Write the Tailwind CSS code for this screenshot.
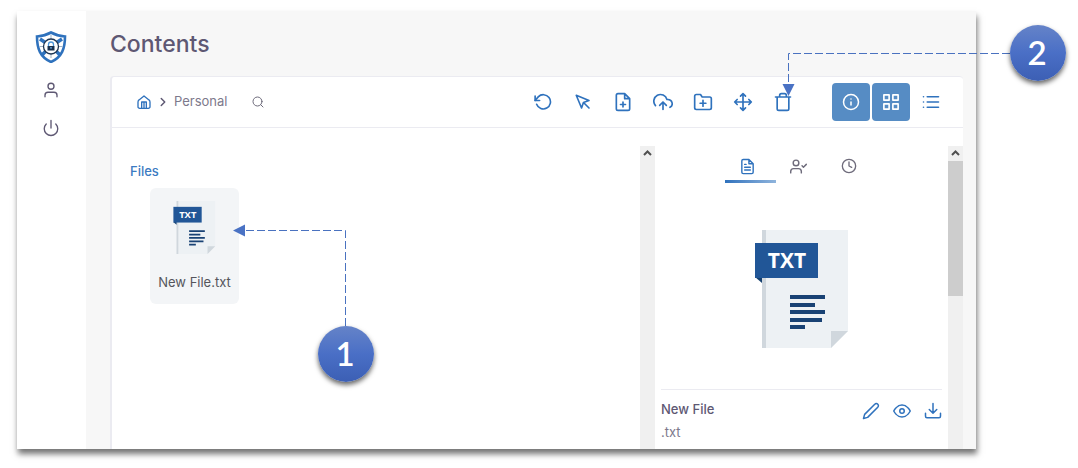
<!DOCTYPE html>
<html lang="en">
<head>
<meta charset="utf-8">
<meta name="viewport" content="width=device-width, initial-scale=1">
<title>Contents</title>
<script src="https://cdn.jsdelivr.net/npm/@tailwindcss/browser@4"></script>
</head>
<body class="relative flex min-h-screen bg-white pt-[11px] pr-[102px] pb-[19px] pl-[17px] font-[Inter,sans-serif] text-[#5e5873]">
<svg class="hidden" aria-hidden="true">
  <symbol id="txt-file" viewBox="0 0 94 118">
    <path fill="#edf1f4" d="M7 0h86v101l-17 17H7z"/>
    <path fill="#d0d7dd" d="M7 0h4v118H7zM76 101h17l-17 17z"/>
    <path fill="#15406f" d="M0 47h7v6z"/>
    <path fill="#215697" d="M0 13h63v35H0z"/>
    <text x="32" y="38" text-anchor="middle" font-family="Open Sans, sans-serif" font-weight="700" font-size="21" fill="#fff">TXT</text>
    <path fill="#194274" d="M35 65h35v4H35zM35 73h25v4H35zM35 80h35v4H35zM35 88h32v4H35zM35 95h15v4H35z"/>
  </symbol>
</svg>

<div class="flex min-w-0 flex-1 overflow-hidden bg-[#f7f7f7] shadow-[1px_5px_6px_rgba(0,0,0,0.55)]">
  <nav class="flex w-[69px] shrink-0 flex-col items-center bg-white pt-5 pr-0.5" aria-label="Main">
    <a href="#" aria-label="Home">
      <svg class="h-8 w-8" viewBox="0 0 32 32" fill="none">
        <path d="M16 1.500C11.500 4 7 5 2 5.500c0 12 3 20.500 14 25.500 11-5 14-13.500 14-25.500C25 5 20.500 4 16 1.500z" stroke="#2f72bd" stroke-width="2.600" fill="#fff"/>
        <path d="M5 8l6 4M27 8l-6 4M7 24l5-5M25 24l-5-5" stroke="#2f72bd" stroke-width="3.500"/>
        <path d="M16 4v4M16 23v4M4.500 15.500H8M24 15.500h3.500" stroke="#9fb3c8"/>
        <circle cx="16" cy="15.500" r="7.500" fill="#fff" stroke="#1d3552" stroke-width="1.300"/>
        <path d="M13.500 15v-1.500a2.500 2.500 0 0 1 5 0V15" stroke="#4f97d8" stroke-width="1.300"/>
        <path d="M12.500 15h7v4.500h-7z" fill="#17304e"/>
        <circle cx="16" cy="16.800" r=".9" fill="#6fb0e8"/>
      </svg>
    </a>
    <a href="#" class="mt-[18px]" aria-label="Profile">
      <svg class="h-[18px] w-[18px]" viewBox="0 0 24 24" fill="none" stroke="currentColor" stroke-width="1.800" stroke-linecap="round" stroke-linejoin="round"><path d="M20 21v-2a4 4 0 0 0-4-4H8a4 4 0 0 0-4 4v2"/><circle cx="12" cy="7" r="4"/></svg>
    </a>
    <a href="#" class="mt-5" aria-label="Sign out">
      <svg class="h-[18px] w-[18px]" viewBox="0 0 24 24" fill="none" stroke="currentColor" stroke-width="1.800" stroke-linecap="round" stroke-linejoin="round"><path d="M18.360 6.640a9 9 0 1 1-12.730 0M12 2v10"/></svg>
    </a>
  </nav>

  <main class="flex min-w-0 flex-1 flex-col pt-[17px] pr-[13px] pl-6">
    <h1 class="mb-4 text-[23px] leading-8 font-medium">Contents</h1>

    <section class="flex min-w-0 flex-1 flex-col rounded-t border-t border-l-2 border-[#ebebf1] bg-white">
      <div class="flex h-[51px] shrink-0 items-center border-b border-[#ebebf1] pr-[13px] pl-6">
        <div class="flex flex-1 items-center">
          <a href="#" class="text-[#2f72bd]" aria-label="Root folder">
            <svg class="h-4 w-4" viewBox="0 0 24 24" fill="none" stroke="currentColor" stroke-width="2" stroke-linecap="round" stroke-linejoin="round"><path d="M5 8.500L12 3l7 5.500A4 4 0 0 1 21 12v7a2.500 2.500 0 0 1-2.500 2.500h-13A2.500 2.500 0 0 1 3 19v-7a4 4 0 0 1 2-3.500zM8.500 21v-9h7v9M12 13v8"/></svg>
          </a>
          <svg class="mx-1 h-3.5 w-3.5" viewBox="0 0 24 24" fill="none" stroke="currentColor" stroke-width="2.500" stroke-linecap="round" stroke-linejoin="round"><path d="M9 18l6-6-6-6"/></svg>
          <a href="#" class="text-[13px] text-[#7d798c]">Personal</a>
          <button type="button" class="ml-6 text-[#6e6b7b]" aria-label="Search">
            <svg class="h-3 w-3" viewBox="0 0 24 24" fill="none" stroke="currentColor" stroke-width="2" stroke-linecap="round"><circle cx="11" cy="11" r="9"/><path d="M22 22l-4.600-4.600"/></svg>
          </button>
        </div>
        <div class="mr-[29px] flex text-[#2f72bd]">
          <button type="button" class="grid h-10 w-10 place-items-center" aria-label="Refresh">
            <svg class="h-[18px] w-[18px]" viewBox="0 0 24 24" fill="none" stroke="currentColor" stroke-width="2.200" stroke-linecap="round" stroke-linejoin="round"><path d="M1.500 4v6h6"/><path d="M3.510 15a9.500 9.500 0 1 0 2.130-9.860L1.500 10"/></svg>
          </button>
          <button type="button" class="grid h-10 w-10 place-items-center" aria-label="Select">
            <svg class="h-[18px] w-[18px]" viewBox="0 0 24 24" fill="none" stroke="currentColor" stroke-width="2.200" stroke-linecap="round" stroke-linejoin="round"><path d="M3 3l7.070 16.970 2.510-7.390 7.390-2.510zM13 13l7 7"/></svg>
          </button>
          <button type="button" class="grid h-10 w-10 place-items-center" aria-label="New file">
            <svg class="h-5 w-5" viewBox="0 0 24 24" fill="none" stroke="currentColor" stroke-width="2" stroke-linecap="round" stroke-linejoin="round"><path d="M14 2H6a2 2 0 0 0-2 2v16a2 2 0 0 0 2 2h12a2 2 0 0 0 2-2V8zM14 2v6h6M12 18v-6M9 15h6"/></svg>
          </button>
          <button type="button" class="grid h-10 w-10 place-items-center" aria-label="Upload">
            <svg class="h-5 w-5" viewBox="0 0 24 24" fill="none" stroke="currentColor" stroke-width="2" stroke-linecap="round" stroke-linejoin="round"><path d="M16 16l-4-4-4 4M12 12v9"/><path d="M20.390 18.390A5 5 0 0 0 18 9h-1.260A8 8 0 1 0 3 16.300"/></svg>
          </button>
          <button type="button" class="grid h-10 w-10 place-items-center" aria-label="New folder">
            <svg class="h-5 w-5" viewBox="0 0 24 24" fill="none" stroke="currentColor" stroke-width="2" stroke-linecap="round" stroke-linejoin="round"><path d="M22 19a2 2 0 0 1-2 2H4a2 2 0 0 1-2-2V5a2 2 0 0 1 2-2h5l2 3h9a2 2 0 0 1 2 2zM12 17v-7M8.500 13.500h7"/></svg>
          </button>
          <button type="button" class="grid h-10 w-10 place-items-center" aria-label="Move">
            <svg class="h-5 w-5" viewBox="0 0 24 24" fill="none" stroke="currentColor" stroke-width="2" stroke-linecap="round" stroke-linejoin="round"><path d="M5 9l-3 3 3 3M9 5l3-3 3 3M15 19l-3 3-3-3M19 9l3 3-3 3M2 12h20M12 2v20"/></svg>
          </button>
          <button type="button" class="grid h-10 w-10 place-items-center" aria-label="Delete">
            <svg class="h-5 w-5" viewBox="0 0 24 24" fill="none" stroke="currentColor" stroke-width="2" stroke-linecap="round" stroke-linejoin="round"><path d="M3 6h18M19 6v14a2 2 0 0 1-2 2H7a2 2 0 0 1-2-2V6m3 0V4a2 2 0 0 1 2-2h4a2 2 0 0 1 2 2v2"/></svg>
          </button>
        </div>
        <div class="flex gap-0.5">
          <button type="button" class="grid h-[38px] w-[38px] place-items-center rounded bg-[#568cc4] text-white" aria-label="Details" aria-pressed="true">
            <svg class="h-[18px] w-[18px]" viewBox="0 0 24 24" fill="none" stroke="currentColor" stroke-width="2" stroke-linecap="round" stroke-linejoin="round"><circle cx="12" cy="12" r="10"/><path d="M12 16v-4M12 8h.01"/></svg>
          </button>
          <button type="button" class="grid h-[38px] w-[38px] place-items-center rounded bg-[#568cc4] text-white" aria-label="Grid view" aria-pressed="true">
            <svg class="h-[18px] w-[18px]" viewBox="0 0 24 24" fill="none" stroke="currentColor" stroke-width="2.200" stroke-linejoin="round"><path d="M2.500 2.500h7v7h-7zM14.500 2.500h7v7h-7zM14.500 14.500h7v7h-7zM2.500 14.500h7v7h-7z"/></svg>
          </button>
          <button type="button" class="grid h-[38px] w-[38px] place-items-center text-[#2f72bd]" aria-label="List view">
            <svg class="h-[18px] w-[18px]" viewBox="0 0 24 24" fill="none" stroke="currentColor" stroke-width="2.200" stroke-linecap="round"><path d="M7 5h15M7 12h15M7 19h15M2 5h.01M2 12h.01M2 19h.01"/></svg>
          </button>
        </div>
      </div>

      <div class="flex min-h-0 flex-1 pt-[18px]">
        <div class="min-w-0 flex-1 pt-[15px] pl-[18px]">
          <h2 class="text-[13px] leading-5 font-medium text-[#3b7bc2]">Files</h2>
          <button type="button" class="mt-[7px] ml-5 flex h-[116px] w-[89px] flex-col items-center rounded-md bg-[#f3f5f7] pt-[13px] text-[13px] text-[#55555c]">
            <svg class="h-[53px] w-[43px]" aria-hidden="true"><use href="#txt-file"/></svg>
            <span class="mt-[18px] leading-5 whitespace-nowrap">New File.txt</span>
          </button>
        </div>

        <div class="w-[15px] shrink-0 bg-[#f0f0f0]" aria-hidden="true">
          <svg class="h-[15px] w-[15px]" viewBox="0 0 15 15" fill="none" stroke="#505050" stroke-width="2"><path d="M4 9l3.500-3.500L11 9"/></svg>
        </div>

        <aside class="flex w-[293px] shrink-0 flex-col px-1.5" aria-label="File details">
          <div class="flex justify-center">
            <button type="button" class="flex h-[37px] w-[51px] flex-col items-start justify-between pt-3 text-[#2f72bd]" aria-label="Information">
              <svg class="ml-3.5 h-[17px] w-[17px]" viewBox="0 0 24 24" fill="none" stroke="currentColor" stroke-width="2" stroke-linecap="round" stroke-linejoin="round"><path d="M14 2H6a2 2 0 0 0-2 2v16a2 2 0 0 0 2 2h12a2 2 0 0 0 2-2V8zM14 2v6h6M16 13H8M16 17H8M10 9H8"/></svg>
              <span class="h-[3px] w-full bg-linear-to-r from-[#2f72bd] to-[#8fb4dc]"></span>
            </button>
            <button type="button" class="flex h-[37px] w-[51px] items-start pt-3 pl-3.5 text-[#6e6b7b]" aria-label="Permissions">
              <svg class="h-[17px] w-[17px]" viewBox="0 0 24 24" fill="none" stroke="currentColor" stroke-width="2" stroke-linecap="round" stroke-linejoin="round"><path d="M16 21v-2a4 4 0 0 0-4-4H5a4 4 0 0 0-4 4v2"/><circle cx="8.500" cy="7" r="4"/><path d="M17 11l2 2 4-4"/></svg>
            </button>
            <button type="button" class="flex h-[37px] w-[51px] items-start pt-3 pl-3.5 text-[#6e6b7b]" aria-label="History">
              <svg class="h-4 w-4" viewBox="0 0 24 24" fill="none" stroke="currentColor" stroke-width="2" stroke-linecap="round" stroke-linejoin="round"><circle cx="12" cy="12" r="10"/><path d="M12 6v6l4 2"/></svg>
            </button>
          </div>
          <svg class="mt-[47px] h-[118px] w-[94px] self-center" role="img" aria-label="Text file"><use href="#txt-file"/></svg>
          <div class="mt-[41px] flex items-start justify-between border-t border-[#ebebf1] pt-[9px]">
            <div class="text-[13px]">
              <h3 class="leading-5 font-medium">New File</h3>
              <p class="mt-[3px] leading-5 text-[#7d798c]">.txt</p>
            </div>
            <div class="flex gap-[13px] pt-[3px] text-[#2f72bd]">
              <button type="button" aria-label="Rename"><svg class="h-[18px] w-[18px]" viewBox="0 0 24 24" fill="none" stroke="currentColor" stroke-width="2" stroke-linecap="round" stroke-linejoin="round"><path d="M17 3a2.830 2.830 0 1 1 4 4L7.500 20.500 2 22l1.500-5.500z"/></svg></button>
              <button type="button" aria-label="Preview"><svg class="h-[18px] w-[18px]" viewBox="0 0 24 24" fill="none" stroke="currentColor" stroke-width="2" stroke-linecap="round" stroke-linejoin="round"><path d="M1 12s4-8 11-8 11 8 11 8-4 8-11 8-11-8-11-8z"/><circle cx="12" cy="12" r="3"/></svg></button>
              <button type="button" aria-label="Download"><svg class="h-[18px] w-[18px]" viewBox="0 0 24 24" fill="none" stroke="currentColor" stroke-width="2" stroke-linecap="round" stroke-linejoin="round"><path d="M22 15v4a2 2 0 0 1-2 2H4a2 2 0 0 1-2-2v-4M7 10l5 5 5-5M12 15V2"/></svg></button>
            </div>
          </div>
        </aside>

        <div class="w-[15px] shrink-0 bg-[#f0f0f0]" aria-hidden="true">
          <svg class="h-[15px] w-[15px]" viewBox="0 0 15 15" fill="none" stroke="#505050" stroke-width="2"><path d="M4 9l3.500-3.500L11 9"/></svg>
          <div class="h-[135px] bg-[#cdcdcd]"></div>
        </div>
      </div>
    </section>
  </main>
</div>

<!-- Callouts drawn over the window -->
<svg class="pointer-events-none absolute top-0 left-0 h-[468px] w-[1078px]" viewBox="0 0 1078 468" fill="none" stroke="#4a72c0" aria-hidden="true">
  <path d="M345.500 326V230.500H244" stroke-dasharray="8 3"/>
  <path d="M1010 53.500H788.500V84" stroke-dasharray="8 3"/>
  <path d="M233 230.500l12-6v12zM788.500 96l-6-12h12z" fill="#4a72c4" stroke="none"/>
</svg>
<div class="absolute top-[326px] left-[318px] flex h-14 w-14 items-center justify-center rounded-full bg-linear-to-b from-[#6583c8] via-[#4a6fc6] to-[#3c5fb4] pr-0.5 pb-0.5 font-[Lato,sans-serif] text-[33px] leading-none font-semibold text-white shadow-[0_3px_5px_rgba(0,0,0,0.6)]">1</div>
<div class="absolute top-[25px] left-[1010px] flex h-14 w-14 items-center justify-center rounded-full bg-linear-to-b from-[#6583c8] via-[#4a6fc6] to-[#3c5fb4] pr-0.5 pb-0.5 font-[Lato,sans-serif] text-[33px] leading-none font-semibold text-white shadow-[0_3px_5px_rgba(0,0,0,0.6)]">2</div>
</body>
</html>
